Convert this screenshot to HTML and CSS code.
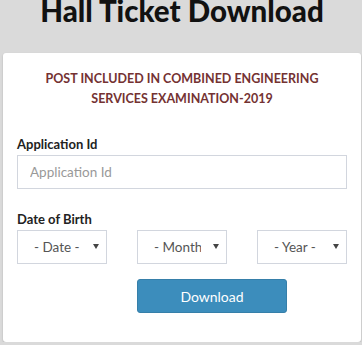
FILE: index.html
```html
<!DOCTYPE html>
<html lang="en">
<head>
  <meta charset="UTF-8" />
  <meta name="viewport" content="width=device-width, initial-scale=1" />
  <title>Hall Ticket Download</title>
  <link rel="stylesheet" href="styles.css">
</head>
<body>

<h1 class="page-title">Hall Ticket Download</h1>

<div class="box">
  <h4 class="exam-name">POST INCLUDED IN COMBINED ENGINEERING SERVICES EXAMINATION-2019</h4>

  <form class="ticket-form" onsubmit="return false;">
    <div class="form-group">
      <label for="appId">Application Id</label>
      <input type="text" id="appId" class="form-control" placeholder="Application Id">
    </div>

    <div class="form-group dob">
      <label>Date of Birth</label>
      <div class="dob-row">
        <div class="select-wrap">
          <select class="form-control">
            <option>- Date -</option>
          </select>
        </div>
        <div class="select-wrap">
          <select class="form-control">
            <option>- Month -</option>
          </select>
        </div>
        <div class="select-wrap">
          <select class="form-control">
            <option>- Year -</option>
          </select>
        </div>
        <button type="submit" class="btn-download">Download</button>
      </div>
    </div>
  </form>
</div>

</body>
</html>
```

FILE: styles.css
```css
body {
  font-family: Lato, 'Open Sans', sans-serif;
  margin: 0;
  padding: 0 1px 0 3px;
  background-color: #dadada;
  color: #333;
}
.page-title {
  margin: -9px 0 0;
  height: 62px;
  text-align: center;
  font-size: 29.5px;
  line-height: 40px;
  font-weight: 900;
  color: #111;
}
.box {
  background: #fff;
  border-radius: 3px;
  box-shadow: 0 1px 2px rgba(0,0,0,0.2);
  padding: 16px 14px 29px;
}
.exam-name {
  margin: 0 auto 25px;
  max-width: 290px;
  text-align: center;
  font-size: 12.5px;
  line-height: 20px;
  font-weight: 700;
  color: #743232;
}
.form-group {
  margin-bottom: 20px;
}
.form-group label {
  display: block;
  font-size: 13px;
  font-weight: 700;
  line-height: 20px;
  margin-bottom: 1px;
  color: #222;
}
.form-control {
  display: block;
  box-sizing: border-box;
  width: 100%;
  height: 34px;
  border: 1px solid #d2d6de;
  border-radius: 0;
  padding: 6px 12px;
  font-family: inherit;
  font-size: 13.5px;
  color: #555;
  background: #fff;
}
.form-control::placeholder {
  color: #999;
}
.dob {
  margin-bottom: 0;
}
.dob-row {
  display: grid;
  grid-template-columns: repeat(3, 90px);
  justify-content: space-between;
  row-gap: 15px;
}
.select-wrap {
  position: relative;
}
.select-wrap select {
  appearance: none;
  -webkit-appearance: none;
  padding: 6px 25px 6px 16px;
}
.select-wrap::after {
  content: '';
  position: absolute;
  right: 8px;
  top: 14px;
  border-left: 3px solid transparent;
  border-right: 3px solid transparent;
  border-top: 5px solid #444;
  pointer-events: none;
}
.btn-download {
  grid-column: 2 / 4;
  width: 150px;
  height: 34px;
  background-color: #3c8dbc;
  border: 1px solid #367fa9;
  border-radius: 3px;
  color: #fff;
  font-family: inherit;
  font-size: 14px;
  cursor: pointer;
}
.btn-download:hover {
  background-color: #367fa9;
}
```
